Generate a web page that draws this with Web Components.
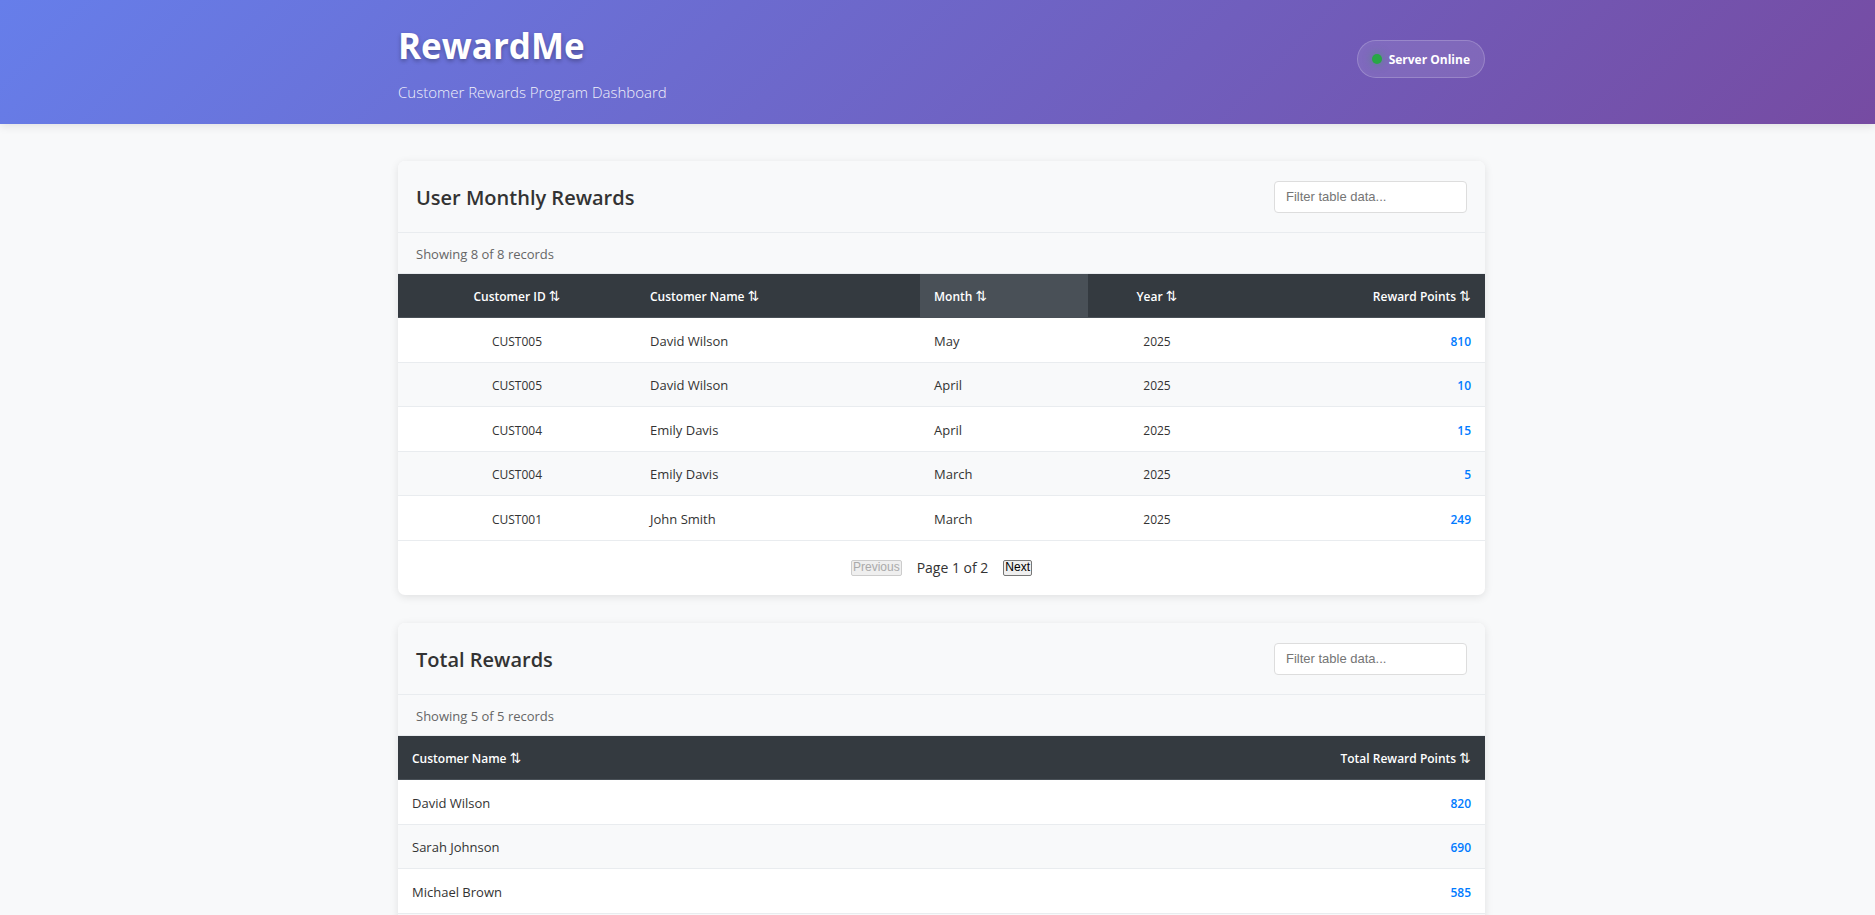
<!DOCTYPE html>
<html lang="en">
<head>
<meta charset="utf-8">
<title>RewardMe</title>
<style>
  body {
    margin: 0;
    background: #f8f9fa;
    color: #333;
    font-family: "Open Sans", "Noto Sans", sans-serif;
    --page-width: 1087px;
    --page-gutter: 8px;
    --line: #e9ecef;
  }
</style>
</head>
<body>
<reward-app></reward-app>

<template id="header-tpl">
  <style>
    :host {
      display: block;
      position: relative;
      background: linear-gradient(135deg, #667eea 0%, #764ba2 100%);
      box-shadow: 0 2px 9px rgba(0, 0, 0, .1);
      color: #fff;
      padding: 20px 0 20px var(--page-gutter);
    }
    .inner {
      max-width: var(--page-width);
      margin: 0 auto;
      display: flex;
      justify-content: space-between;
      align-items: flex-start;
    }
    h1 { margin: 0; font-size: 35px; line-height: 52px; font-weight: 700; text-shadow: 0 2px 4px rgba(0, 0, 0, .3); }
    p { margin: 8px 0 0; font-size: 15px; line-height: 24px; font-weight: 300; opacity: .9; }
    slot[name="status"] { display: block; }
    ::slotted([slot="status"]) { margin-top: 20px; }
  </style>
  <div class="inner">
    <div>
      <h1><slot></slot></h1>
      <p><slot name="tagline"></slot></p>
    </div>
    <slot name="status"></slot>
  </div>
</template>

<template id="status-tpl">
  <style>
    :host {
      display: flex;
      align-items: center;
      gap: 7px;
      box-sizing: border-box;
      height: 38px;
      padding: 0 14px;
      border: 1px solid rgba(255, 255, 255, .2);
      border-radius: 22px;
      background: rgba(255, 255, 255, .1);
      font-size: 12px;
      line-height: 18px;
      font-weight: 700;
    }
    .dot { width: 10px; height: 10px; border-radius: 50%; background: #28a745; box-shadow: 0 0 8px rgba(40, 167, 69, .5); }
    .label { padding-top: 2px; }
  </style>
  <span class="dot"></span>
  <span class="label"><slot></slot></span>
</template>

<template id="table-tpl">
  <style>
    :host {
      display: block;
      background: #fff;
      border-radius: 7px;
      box-shadow: 0 2px 9px rgba(0, 0, 0, .1);
      overflow: hidden;
    }
    header {
      display: flex;
      justify-content: space-between;
      align-items: center;
      height: 71px;
      padding: 0 18px;
      background: #f8f9fa;
      border-bottom: 1px solid var(--line);
    }
    h2 { margin: 0; font-size: 20px; line-height: 28px; padding-top: 2px; font-weight: 600; }
    input {
      box-sizing: border-box;
      width: 193px;
      height: 32px;
      padding: 0 11px;
      border: 1px solid #ddd;
      border-radius: 4px;
      background: #fff;
      font: 13px "Liberation Sans", Arial, sans-serif;
    }
    input::placeholder { color: #757575; }
    .count {
      height: 40px;
      padding: 0 18px;
      background: #f8f9fa;
      border-bottom: 1px solid var(--line);
      color: #666;
      font-size: 13px;
      line-height: 42px;
    }
    table { width: 100%; table-layout: fixed; border-collapse: separate; border-spacing: 0; font-size: 12px; line-height: 18px; }
    th, td { box-sizing: border-box; text-align: left; border-bottom: 1px solid var(--line); }
    th { height: 44px; padding: 2px 14px 0; background: #343a40; color: #fff; font-weight: 600; border-color: #495057; }
    th.sorted { background: #495057; }
    .arrows { font: 14px/14px "DejaVu Sans", sans-serif; }
    td { height: 45px; padding: 14px 14px 0; font-size: 13px; vertical-align: baseline; }
    tbody tr:nth-child(even) td { height: 44px; padding-top: 13px; background: #f8f9fa; }
    .center { text-align: center; }
    .points { text-align: right; }
    td.center, td.points { font-size: 12px; }
    td.points { color: #007bff; font-weight: 600; }
    nav { display: flex; justify-content: center; align-items: center; gap: 15px; height: 54px; font-size: 14px; line-height: 22px; }
    nav[hidden] { display: none; }
    button {
      box-sizing: border-box;
      height: 16px;
      padding: 0 1px 2px;
      border: 1px solid #767676;
      border-radius: 2px;
      background: #efefef;
      color: #000;
      font: 12px/12px "Liberation Sans", Arial, sans-serif;
    }
    button:disabled { border-color: #ccc; color: #aaa; }
  </style>
  <header>
    <h2></h2>
    <input type="text" placeholder="Filter table data..." aria-label="Filter table data">
  </header>
  <div class="count"></div>
  <table>
    <colgroup></colgroup>
    <thead><tr></tr></thead>
    <tbody></tbody>
  </table>
  <nav aria-label="Pagination">
    <button type="button" class="prev">Previous</button>
    <span class="page"></span>
    <button type="button" class="next">Next</button>
  </nav>
</template>

<template id="app-tpl">
  <style>
    :host { display: block; }
    main { padding: 37px 0 28px var(--page-gutter); }
    .stack { max-width: var(--page-width); margin: 0 auto; display: grid; gap: 28px; }
  </style>
  <page-header>
    RewardMe
    <span slot="tagline">Customer Rewards Program Dashboard</span>
    <server-status slot="status">Server Online</server-status>
  </page-header>
  <main>
    <div class="stack">
      <data-table id="monthly"></data-table>
      <data-table id="totals"></data-table>
    </div>
  </main>
</template>

<script>
  const PAGE_SIZE = 5;

  function attach(host, id) {
    const root = host.attachShadow({ mode: 'open' });
    root.append(document.getElementById(id).content.cloneNode(true));
    return root;
  }

  class PageHeader extends HTMLElement {
    constructor() { super(); attach(this, 'header-tpl'); }
  }

  class ServerStatus extends HTMLElement {
    constructor() { super(); attach(this, 'status-tpl'); }
  }

  class DataTable extends HTMLElement {
    constructor() {
      super();
      this.root = attach(this, 'table-tpl');
      this.page = 0;
      this.query = '';
      this.root.querySelector('.prev').addEventListener('click', () => { this.page--; this.renderRows(); });
      this.root.querySelector('.next').addEventListener('click', () => { this.page++; this.renderRows(); });
      this.root.querySelector('input').addEventListener('input', (e) => {
        this.query = e.target.value.toLowerCase();
        this.page = 0;
        this.renderRows();
      });
    }

    set config(config) {
      this.cfg = config;
      this.root.querySelector('h2').textContent = config.title;
      const cols = this.root.querySelector('colgroup');
      const head = this.root.querySelector('thead tr');
      for (const column of config.columns) {
        const col = document.createElement('col');
        col.style.width = column.width + 'px';
        cols.append(col);
        const th = document.createElement('th');
        th.scope = 'col';
        th.className = [column.kind || '', column.sorted ? 'sorted' : ''].join(' ').trim();
        const arrows = document.createElement('span');
        arrows.className = 'arrows';
        arrows.textContent = '⇅';
        th.append(column.label + ' ', arrows);
        head.append(th);
      }
      this.renderRows();
    }

    renderRows() {
      const { rows, columns } = this.cfg;
      const found = rows.filter((row) => row.join(' ').toLowerCase().includes(this.query));
      const pages = Math.max(1, Math.ceil(found.length / PAGE_SIZE));
      const start = this.page * PAGE_SIZE;
      const body = this.root.querySelector('tbody');
      body.replaceChildren(...found.slice(start, start + PAGE_SIZE).map((row) => {
        const tr = document.createElement('tr');
        row.forEach((value, i) => {
          const td = document.createElement('td');
          td.className = columns[i].kind || '';
          td.textContent = value;
          tr.append(td);
        });
        return tr;
      }));
      this.root.querySelector('.count').textContent = `Showing ${found.length} of ${rows.length} records`;
      this.root.querySelector('nav').hidden = pages < 2;
      this.root.querySelector('.page').textContent = `Page ${this.page + 1} of ${pages}`;
      this.root.querySelector('.prev').disabled = this.page === 0;
      this.root.querySelector('.next').disabled = this.page >= pages - 1;
    }
  }

  class RewardApp extends HTMLElement {
    constructor() { super(); this.root = attach(this, 'app-tpl'); }
    connectedCallback() {
      this.root.getElementById('monthly').config = {
        title: 'User Monthly Rewards',
        columns: [
          { label: 'Customer ID', width: 238, kind: 'center' },
          { label: 'Customer Name', width: 284 },
          { label: 'Month', width: 168, sorted: true },
          { label: 'Year', width: 138, kind: 'center' },
          { label: 'Reward Points', width: 259, kind: 'points' },
        ],
        rows: [
          ['CUST005', 'David Wilson', 'May', 2025, 810],
          ['CUST005', 'David Wilson', 'April', 2025, 10],
          ['CUST004', 'Emily Davis', 'April', 2025, 15],
          ['CUST004', 'Emily Davis', 'March', 2025, 5],
          ['CUST001', 'John Smith', 'March', 2025, 249],
          ['CUST003', 'Michael Brown', 'March', 2025, 585],
          ['CUST002', 'Sarah Johnson', 'February', 2025, 690],
          ['CUST001', 'John Smith', 'January', 2025, 90],
        ],
      };
      this.root.getElementById('totals').config = {
        title: 'Total Rewards',
        columns: [
          { label: 'Customer Name', width: 544 },
          { label: 'Total Reward Points', width: 543, kind: 'points' },
        ],
        rows: [
          ['David Wilson', 820],
          ['Sarah Johnson', 690],
          ['Michael Brown', 585],
          ['John Smith', 339],
          ['Emily Davis', 20],
        ],
      };
    }
  }

  customElements.define('page-header', PageHeader);
  customElements.define('server-status', ServerStatus);
  customElements.define('data-table', DataTable);
  customElements.define('reward-app', RewardApp);
</script>
</body>
</html>
